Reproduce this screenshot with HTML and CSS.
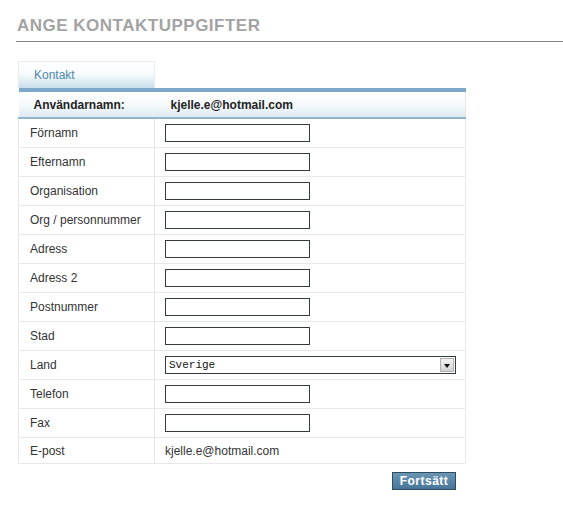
FILE: index.html
```html
<!DOCTYPE html>
<html lang="sv">
<head>
    <meta charset="UTF-8">
    <title>Ange kontaktuppgifter</title>
    <link rel="stylesheet" href="styles.css">
</head>
<body>

    <div class="page">
        <h1 class="page-title">ANGE KONTAKTUPPGIFTER</h1>

        <div class="form-box">
            <!-- Tab -->
            <div class="tabs">
                <div class="tab">Kontakt</div>
            </div>

            <table class="contact-table">
                <tr class="head-row">
                    <th>Användarnamn:</th>
                    <th>kjelle.e@hotmail.com</th>
                </tr>
                <tr><td>Förnamn</td><td><input type="text" class="field"></td></tr>
                <tr><td>Efternamn</td><td><input type="text" class="field"></td></tr>
                <tr><td>Organisation</td><td><input type="text" class="field"></td></tr>
                <tr><td>Org / personnummer</td><td><input type="text" class="field"></td></tr>
                <tr><td>Adress</td><td><input type="text" class="field"></td></tr>
                <tr><td>Adress 2</td><td><input type="text" class="field"></td></tr>
                <tr><td>Postnummer</td><td><input type="text" class="field"></td></tr>
                <tr><td>Stad</td><td><input type="text" class="field"></td></tr>
                <tr>
                    <td>Land</td>
                    <td>
                        <div class="select">
                            <span class="select-value">Sverige</span>
                            <span class="select-arrow"></span>
                        </div>
                    </td>
                </tr>
                <tr><td>Telefon</td><td><input type="text" class="field"></td></tr>
                <tr><td>Fax</td><td><input type="text" class="field"></td></tr>
                <tr class="last-row"><td>E-post</td><td>kjelle.e@hotmail.com</td></tr>
            </table>

            <div class="actions">
                <button class="btn-next">Fortsätt</button>
            </div>
        </div>
    </div>

</body>
</html>
```

FILE: styles.css
```css
body {
    font-family: 'Liberation Sans', Arial, sans-serif;
    margin: 0;
    padding: 0;
    background-color: #fff;
    color: #333;
    font-size: 12px;
}
.page {
    padding: 17px 0 0 16px;
}
.page-title {
    margin: 0;
    padding: 0 0 6px 1px;
    font-size: 17px;
    letter-spacing: 0.5px;
    color: #a3a3a3;
    border-bottom: 1px solid #808080;
    line-height: 18px;
}
.form-box {
    width: 448px;
    margin: 19px 0 0 2px;
}
.tabs {
    display: flex;
}
.tab {
    width: 120px;
    height: 26px;
    padding-left: 15px;
    line-height: 26px;
    font-size: 12px;
    color: #4d88ad;
    border: 1px solid #e4ecf1;
    border-bottom: none;
    background: linear-gradient(to bottom, #ffffff 0%, #f8fbfd 45%, #c9dfeb 100%);
}
.contact-table {
    width: 100%;
    border-collapse: collapse;
    border-top: 4px solid #7da9c8;
}
.contact-table td,
.contact-table th {
    border: 1px solid #e8e8e8;
    height: 28px;
    padding: 0 0 0 11px;
    text-align: left;
    font-size: 12px;
    color: #333;
}
.contact-table td:first-child {
    width: 124px;
}
.contact-table td:last-child {
    padding-left: 10px;
}
.last-row td {
    height: 25px;
}
.head-row th {
    height: 25px;
    font-weight: bold;
    color: #222;
    padding-left: 15px;
    background: linear-gradient(to bottom, #ffffff 0%, #f6fafc 50%, #dceaf2 100%);
    border: none;
    border-bottom: 2px solid #92b7cd;
}
.head-row th:last-child {
    padding-left: 16px;
    border-right: 1px solid #e8e8e8;
}
.field {
    width: 145px;
    height: 18px;
    box-sizing: border-box;
    border: 1px solid #333a40;
    padding: 1px 3px;
    margin: 0;
    display: block;
    font-size: 12px;
}
.select {
    width: 291px;
    height: 18px;
    box-sizing: border-box;
    border: 1px solid #333a40;
    display: flex;
    align-items: center;
    justify-content: space-between;
    background-color: #fff;
}
.select-value {
    font-family: 'Liberation Mono', 'Courier New', monospace;
    font-size: 11px;
    padding-left: 3px;
    color: #111;
}
.select-arrow {
    width: 14px;
    height: 14px;
    margin-right: 1px;
    box-sizing: border-box;
    border: 1px solid #b0b0b0;
    background: linear-gradient(to bottom, #f2f2f2, #d4d4d4);
    position: relative;
}
.select-arrow::after {
    content: '';
    position: absolute;
    left: 3px;
    top: 5px;
    border-left: 3px solid transparent;
    border-right: 3px solid transparent;
    border-top: 4px solid #111;
}
.actions {
    display: flex;
    justify-content: flex-end;
    padding: 8px 10px 0 0;
}
.btn-next {
    width: 64px;
    height: 18px;
    padding: 0;
    font-family: 'Liberation Sans', Arial, sans-serif;
    font-size: 12px;
    font-weight: bold;
    letter-spacing: 0.5px;
    color: #fff;
    border: 1px solid #2d4d63;
    background: linear-gradient(to bottom, #6a95b3 0%, #48769a 100%);
    cursor: pointer;
}
```
